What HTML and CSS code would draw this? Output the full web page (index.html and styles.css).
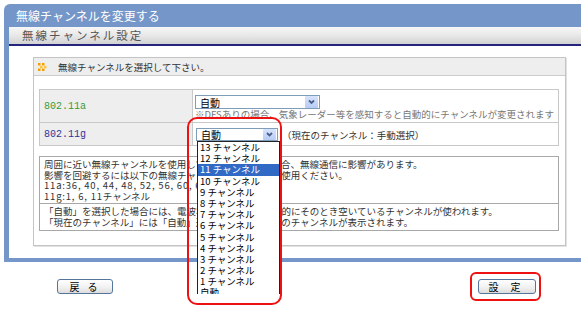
FILE: index.html
```html
<!doctype html>
<html lang="ja">
<head>
	<meta charset="UTF-8" />
	<title>無線チャンネルを変更する</title>
<link rel="stylesheet" href="styles.css">
</head>
<body>
	<section class="frame">
		<div class="title">無線チャンネルを変更する</div>
		<div class="subtitle">無線チャンネル設定</div>
		<div class="content">
			<div class="panel">
				<div class="panel-head">
					<svg class="mark" width="9" height="8" viewBox="0 0 9 8">
						<rect x="0" y="0" width="2.5" height="2.5" fill="#f5a000"/>
						<rect x="4" y="0" width="2.5" height="2.5" fill="#f5a000"/>
						<rect x="2" y="2.8" width="2.5" height="2.5" fill="#ffc43c"/>
						<rect x="6" y="2.8" width="2.5" height="2.5" fill="#ffc43c"/>
						<rect x="0" y="5.5" width="2.5" height="2.5" fill="#f5a000"/>
						<rect x="4" y="5.5" width="2.5" height="2.5" fill="#f5a000"/>
					</svg>
					<span>無線チャンネルを選択して下さい。</span>
				</div>
				<div class="panel-body">
					<table class="channels">
						<tr class="row-a">
							<th class="band band-a">802.11a</th>
							<td>
								<div class="combo combo-a">
									<span class="combo-text">自動</span>
									<span class="arrow"><svg width="13" height="12" viewBox="0 0 13 12"><path d="M4 4.5 L6.5 7 L9 4.5" fill="none" stroke="#4a5f8a" stroke-width="1.8"/></svg></span>
								</div>
								<p class="note">※DFSありの場合、気象レーダー等を感知すると自動的にチャンネルが変更されます</p>
							</td>
						</tr>
						<tr class="row-g">
							<th class="band band-g">802.11g</th>
							<td>
								<div class="line">
									<div class="combo combo-g">
										<span class="combo-text">自動</span>
										<span class="arrow"><svg width="13" height="11" viewBox="0 0 13 11"><path d="M4 4 L6.5 6.5 L9 4" fill="none" stroke="#4a5f8a" stroke-width="1.8"/></svg></span>
										<ul class="options">
											<li>13 チャンネル</li>
											<li>12 チャンネル</li>
											<li class="picked">11 チャンネル</li>
											<li>10 チャンネル</li>
											<li>9 チャンネル</li>
											<li>8 チャンネル</li>
											<li>7 チャンネル</li>
											<li>6 チャンネル</li>
											<li>5 チャンネル</li>
											<li>4 チャンネル</li>
											<li>3 チャンネル</li>
											<li>2 チャンネル</li>
											<li>1 チャンネル</li>
											<li>自動</li>
										</ul>
									</div>
									<span class="current">（現在のチャンネル：手動選択）</span>
								</div>
							</td>
						</tr>
					</table>
					<div class="info">
						<p>周囲に近い無線チャンネルを使用している機器がある場合、無線通信に影響があります。</p>
						<p>影響を回避するには以下の無線チャンネルのいずれかを使用ください。</p>
						<p><span class="nums">11a:36, 40, 44, 48, 52, 56, 60, 64</span>チャンネル</p>
						<p><span class="nums">11g:1, 6, 11</span>チャンネル</p>
					</div>
					<div class="info info-last">
						<p>「自動」を選択した場合には、電波状況を確認し、自動的にそのとき空いているチャンネルが使われます。</p>
						<p>「現在のチャンネル」には「自動」選択時も現在使用中のチャンネルが表示されます。</p>
					</div>
				</div>
			</div>
		</div>
	</section>
	<div class="actions">
		<button class="btn btn-back">戻 る</button>
		<button class="btn btn-set">設 定</button>
	</div>
	<div class="hl hl-list"></div>
	<div class="hl hl-set"></div>
</body>
</html>
```

FILE: styles.css
```css
body,ul,li,p{
	margin: 0;
	padding: 0;
}
body{
	background: #fff;
	font-family: "Noto Sans CJK JP", sans-serif;
	font-size: 9.5px;
	color: #333;
	overflow: hidden;
}
.frame{
	margin: 4px 0 0 4px;
	padding: 0 0 4px 5px;
	background: #7596c8;
	border-top-left-radius: 6px;
}
.title{
	margin-left: -5px;
	padding-left: 12px;
	height: 23px;
	line-height: 23px;
	font-size: 12px;
	color: #fff;
}
.subtitle{
	height: 17px;
	line-height: 17px;
	padding-left: 13px;
	font-size: 11.5px;
	letter-spacing: 2px;
	color: #555;
	background: linear-gradient(#f7f7f7, #e8e8e8 50%, #d2d2d2);
	border-bottom: 2px solid #24247c;
}
.content{
	background: #fff;
	padding: 11px 15px 12px 24px;
}
.panel{
	border: 1px solid #c4c4c4;
	box-shadow: 1px 1px 0 #e2e2e2;
}
.panel-head{
	display: flex;
	align-items: center;
	height: 17px;
	padding-left: 4px;
	background: #eee;
	border-bottom: 1px solid #ccc;
}
.mark{
	margin-right: 11px;
}
.panel-body{
	padding: 13px 6px 14px 5px;
}
.channels{
	width: 100%;
	border-collapse: collapse;
}
.channels th,
.channels td{
	border: 1px solid #c8c8c8;
	text-align: left;
}
.band{
	width: 147px;
	padding-left: 4px;
	background: #eee;
	font-family: "Liberation Mono", monospace;
	font-size: 10px;
	font-weight: normal;
	vertical-align: middle;
}
.band-a{
	color: #3a9a3a;
}
.band-g{
	color: #333399;
}
.row-a td{
	padding: 5px 2px 3px 2px;
	vertical-align: top;
}
.row-g td{
	padding: 5px 2px 4px 3px;
}
.combo{
	display: flex;
	align-items: center;
	justify-content: space-between;
	box-sizing: border-box;
	background: #fff;
	border: 1px solid #7f9db9;
	font-size: 10px;
	color: #000;
}
.combo-text{
	padding-left: 4px;
	line-height: 11px;
}
.combo-a{
	width: 125px;
	height: 14px;
}
.combo-g{
	position: relative;
	width: 82px;
	height: 13px;
}
.arrow{
	display: flex;
	margin-right: 1px;
	background: linear-gradient(#d8e4fc, #b7cbf6);
	border-radius: 1px;
}
.note{
	line-height: 10px;
	color: #777;
	white-space: nowrap;
}
.line{
	display: flex;
	align-items: center;
	height: 13px;
}
.current{
	margin-left: 4px;
	color: #333;
}
.options{
	position: absolute;
	left: 0;
	top: 12px;
	z-index: 2;
	width: 83px;
	list-style: none;
	background: #fff;
	border: 1px solid #222;
	box-sizing: border-box;
}
.options li{
	height: 11.2px;
	line-height: 11.2px;
	padding-left: 2px;
	font-size: 9.5px;
	color: #000;
}
.options li.picked{
	background: #316ac5;
	color: #fff;
}
.info{
	margin-top: 10px;
	padding: 2px 4px;
	border: 1px solid #a8a8a8;
	line-height: 10.5px;
	white-space: nowrap;
	overflow: hidden;
}
.info .nums{
	letter-spacing: 0.8px;
}
.info-last{
	margin-top: 0;
	border-top: none;
	padding-bottom: 3px;
}
.actions{
	display: flex;
	justify-content: space-between;
	margin-top: 17px;
	padding: 0 45px 0 57px;
}
.btn{
	height: 15px;
	padding: 0;
	font-family: "Noto Sans CJK JP", sans-serif;
	font-size: 10px;
	line-height: 13px;
	letter-spacing: 3px;
	color: #000;
	background: linear-gradient(#fff, #f0f0f0 60%, #dcdcdc);
	border: 1px solid #56759c;
	border-radius: 3px;
}
.btn-back{
	width: 56px;
}
.btn-set{
	width: 58px;
	letter-spacing: 5px;
}
.hl{
	position: absolute;
	z-index: 3;
	box-sizing: border-box;
	border: 2px solid #ee1111;
}
.hl-list{
	left: 187px;
	top: 117px;
	width: 95px;
	height: 188px;
	border-radius: 10px;
}
.hl-set{
	left: 470px;
	top: 272px;
	width: 71px;
	height: 29px;
	border-radius: 6px;
}
```
